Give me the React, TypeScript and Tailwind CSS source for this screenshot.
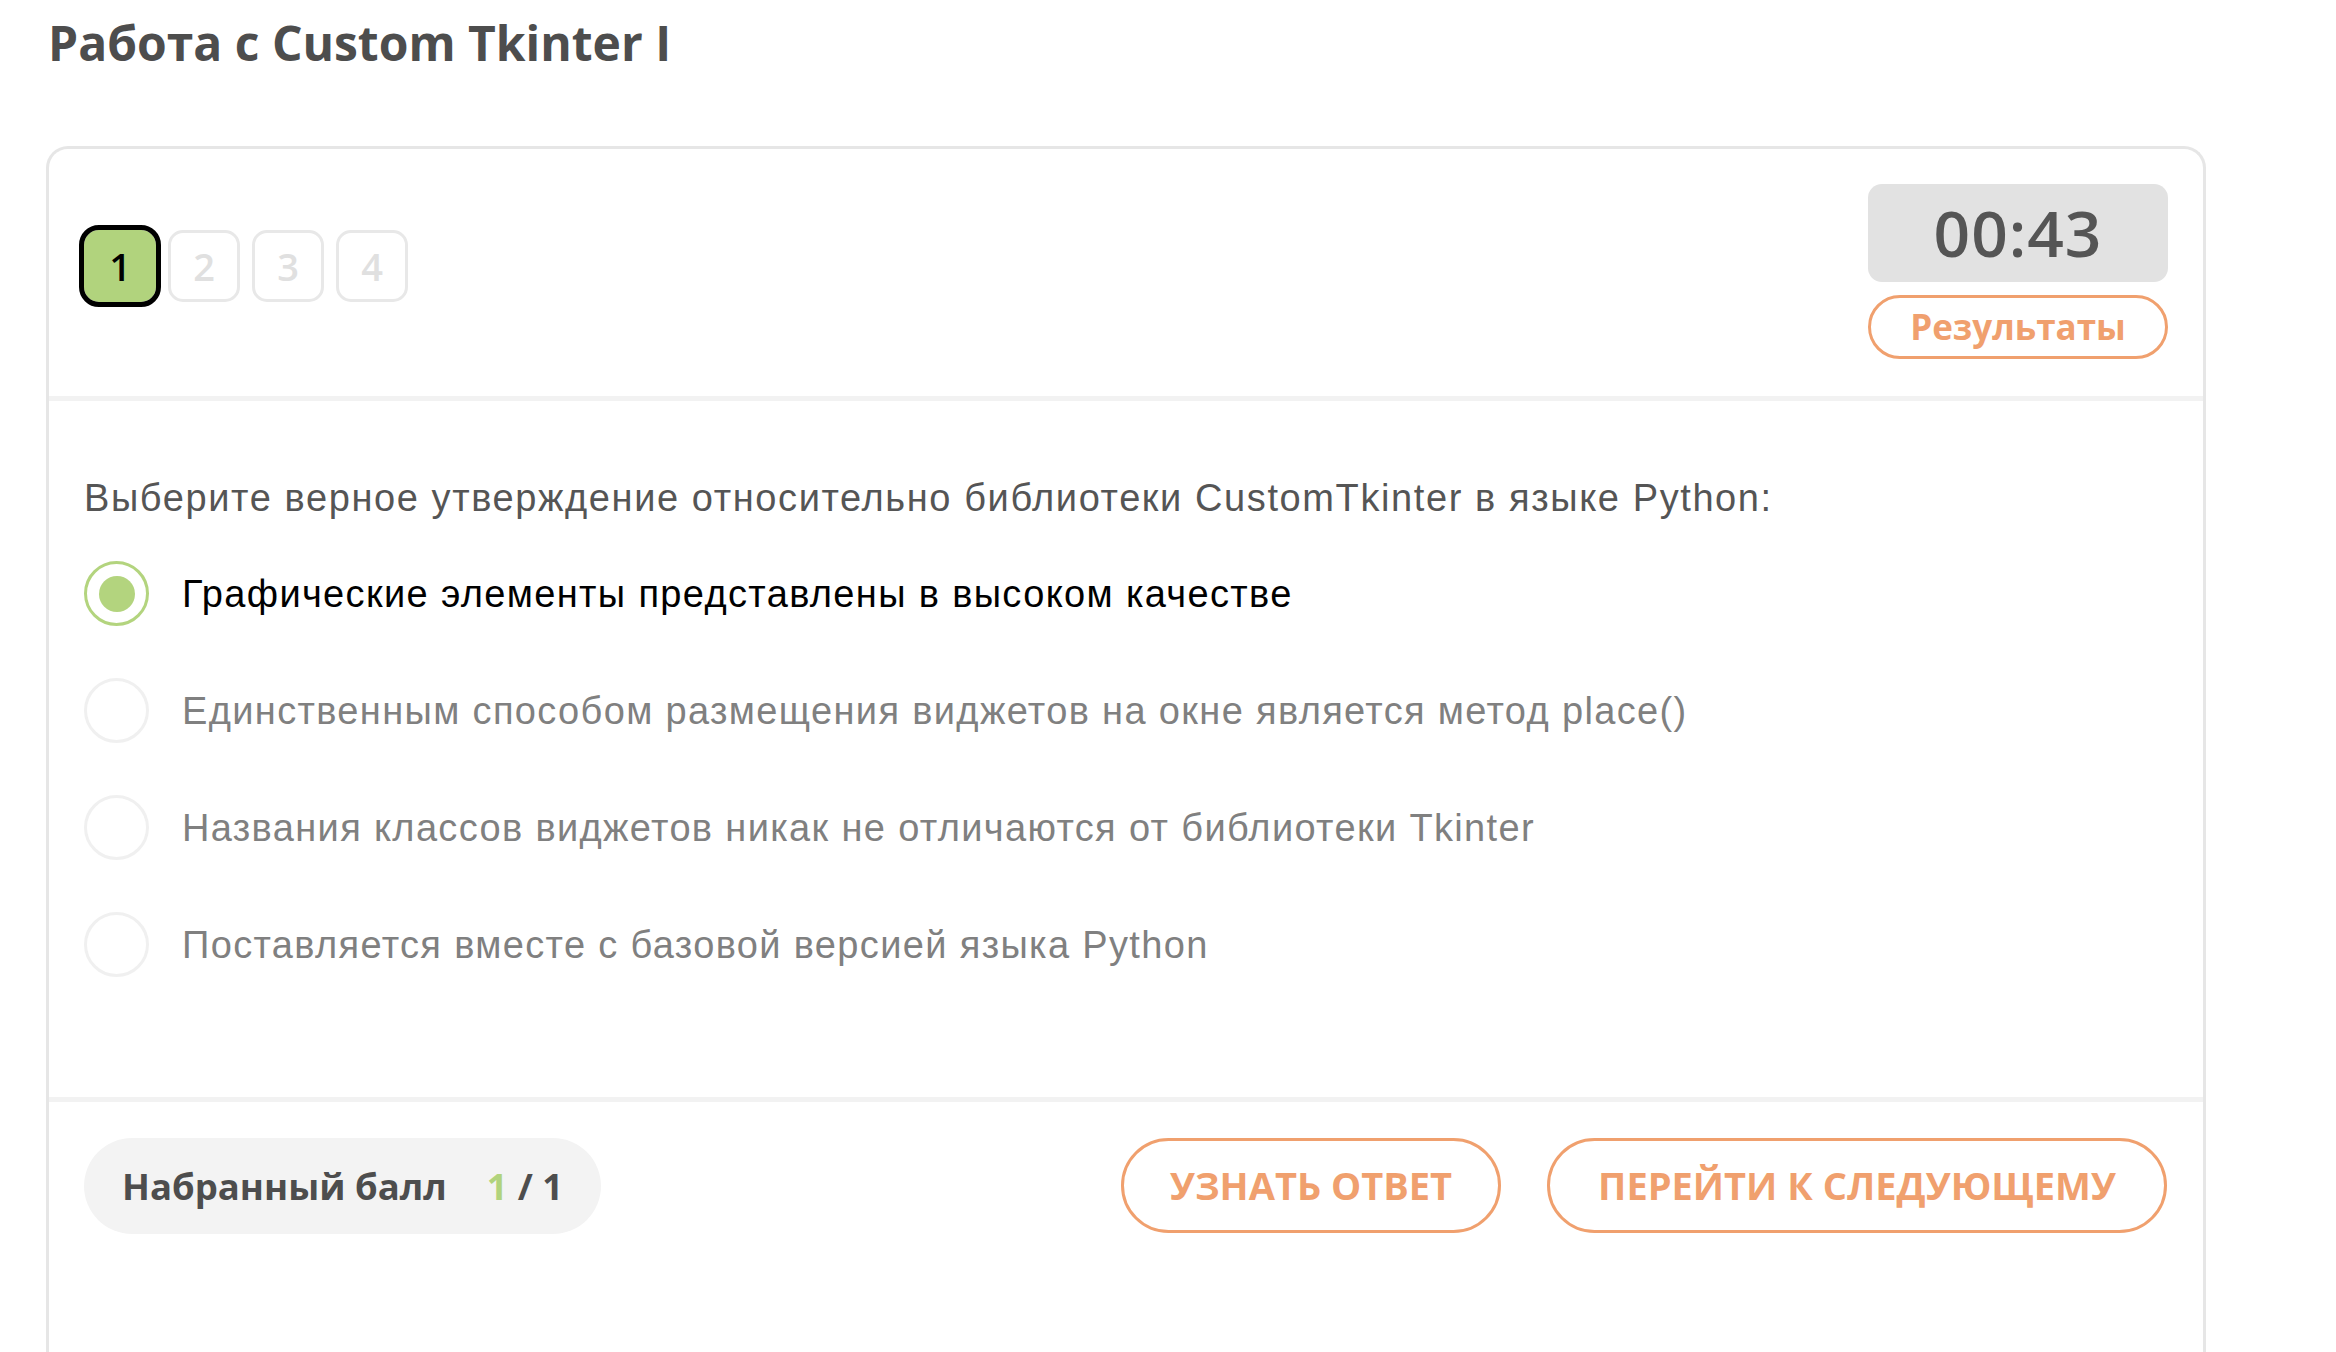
import React from "react";

const sans = { fontFamily: '"Open Sans", "Noto Sans", sans-serif' };
const helv = { fontFamily: '"Liberation Sans", Arial, sans-serif' };

const options = [
  "Графические элементы представлены в высоком качестве",
  "Единственным способом размещения виджетов на окне является метод place()",
  "Названия классов виджетов никак не отличаются от библиотеки Tkinter",
  "Поставляется вместе с базовой версией языка Python",
];

export default function App() {
  const selected = 0;

  return (
    <div className="min-h-screen overflow-hidden bg-white pl-[46px] pt-[13px]" style={sans}>
      {/* Title */}
      <h1 className="pl-[2px] text-[48px] font-bold leading-[60px] text-[#4d4d4d]">
        Работа с Custom Tkinter I
      </h1>

      {/* Quiz card */}
      <div className="mt-[73px] w-[2160px] rounded-t-[22px] border-[3px] border-b-0 border-[#e6e6e6]">
        {/* Header: question steps + timer */}
        <div className="flex items-start justify-between border-b-[5px] border-[#f2f2f2] px-[35px] pt-[35px] pb-[37px]">
          <div className="mt-[46px] flex gap-[12px]">
            {[1, 2, 3, 4].map((n) =>
              n === 1 ? (
                <div
                  key={n}
                  className="flex h-[72px] w-[72px] items-center justify-center rounded-[15px] bg-[#b1d37d] text-[38px] font-semibold text-black outline-[5px] outline-solid outline-black"
                >
                  {n}
                </div>
              ) : (
                <div
                  key={n}
                  className="flex h-[72px] w-[72px] items-center justify-center rounded-[15px] border-[3px] border-[#e8e8e8] text-[38px] font-semibold text-[#e0e0e0]"
                >
                  {n}
                </div>
              )
            )}
          </div>

          <div className="flex w-[300px] flex-col gap-[13px]">
            <div className="flex h-[98px] items-center justify-center rounded-[14px] bg-[#e2e2e2] text-[64px] font-semibold tracking-[1px] text-[#555555]">
              00:43
            </div>
            <button className="flex h-[64px] items-center justify-center rounded-full border-[3px] border-[#f0a06e] text-[35px] font-bold text-[#f0a06e]">
              Результаты
            </button>
          </div>
        </div>

        {/* Question body */}
        <div className="px-[35px] pt-[75px] pb-[120px]" style={helv}>
          <p className="text-[38px] leading-[44px] tracking-[1.6px] text-[#555555]">
            Выберите верное утверждение относительно библиотеки CustomTkinter в языке Python:
          </p>
          <div className="mt-[41px] flex flex-col gap-[52px]">
            {options.map((text, i) => (
              <label key={i} className="flex items-center gap-[33px]">
                {i === selected ? (
                  <span className="flex h-[65px] w-[65px] items-center justify-center rounded-full border-[3px] border-[#b3d47e]">
                    <span className="h-[36px] w-[36px] rounded-full bg-[#b3d47e]" />
                  </span>
                ) : (
                  <span className="h-[65px] w-[65px] rounded-full border-[3px] border-[#f0f0f0]" />
                )}
                <span
                  className={
                    i === selected
                      ? "text-[38px] leading-[44px] tracking-[1.35px] text-black"
                      : "text-[38px] leading-[44px] tracking-[1.35px] text-[#808080]"
                  }
                >
                  {text}
                </span>
              </label>
            ))}
          </div>
        </div>

        {/* Footer: score + actions */}
        <div className="flex items-start justify-between border-t-[5px] border-[#f2f2f2] px-[35px] pt-[36px] pb-[200px]">
          <div className="flex h-[96px] items-center rounded-full bg-[#f3f3f3] pl-[38px] pr-[38px] text-[36.5px] font-bold text-[#4d4d4d]">
            <span>Набранный балл</span>
            <span className="ml-[40px] text-[#b1d37d]">1</span>
            <span className="ml-[10px]">/ 1</span>
          </div>
          <div className="mr-[1px] flex gap-[46px]">
            <button className="flex h-[95px] items-center rounded-full border-[3px] border-[#f0a06e] px-[46px] text-[38px] font-bold text-[#f0a06e]">
              УЗНАТЬ ОТВЕТ
            </button>
            <button className="flex h-[95px] items-center rounded-full border-[3px] border-[#f0a06e] px-[48px] text-[38px] font-bold text-[#f0a06e]">
              ПЕРЕЙТИ К СЛЕДУЮЩЕМУ
            </button>
          </div>
        </div>
      </div>
    </div>
  );
}
